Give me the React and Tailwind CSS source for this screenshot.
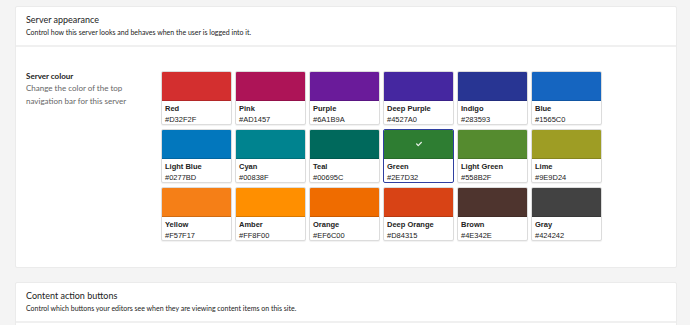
import { FaCheck } from "react-icons/fa";

const colours = [
  { name: "Red", hex: "#D32F2F" },
  { name: "Pink", hex: "#AD1457" },
  { name: "Purple", hex: "#6A1B9A" },
  { name: "Deep Purple", hex: "#4527A0" },
  { name: "Indigo", hex: "#283593" },
  { name: "Blue", hex: "#1565C0" },
  { name: "Light Blue", hex: "#0277BD" },
  { name: "Cyan", hex: "#00838F" },
  { name: "Teal", hex: "#00695C" },
  { name: "Green", hex: "#2E7D32" },
  { name: "Light Green", hex: "#558B2F" },
  { name: "Lime", hex: "#9E9D24" },
  { name: "Yellow", hex: "#F57F17" },
  { name: "Amber", hex: "#FF8F00" },
  { name: "Orange", hex: "#EF6C00" },
  { name: "Deep Orange", hex: "#D84315" },
  { name: "Brown", hex: "#4E342E" },
  { name: "Gray", hex: "#424242" },
];

function Swatch({ colour, selected }) {
  return (
    <div
      className={`h-[54px] rounded-[2px] bg-white overflow-hidden flex flex-col ${
        selected
          ? "border-[1.5px] border-[#2f3fa0]"
          : "border border-[#dcdcdc] shadow-[0_1px_1px_rgba(0,0,0,0.06)]"
      }`}
    >
      <div
        className="h-[29px] shrink-0 flex items-center justify-center border-b border-black/15"
        style={{ backgroundColor: colour.hex }}
      >
        {selected && <FaCheck className="text-white w-[6px] h-[6px] opacity-90" />}
      </div>
      <div className="px-[3px] pt-[2px] font-['Liberation_Sans',Arial,sans-serif] text-[7.5px] leading-[11px] text-[#222]">
        <div className="font-bold">{colour.name}</div>
        <div>{colour.hex}</div>
      </div>
    </div>
  );
}

function SectionHeader({ title, text }) {
  return (
    <div className="px-[10px] pt-[7px] pb-[6px] border-b-2 border-[#f0f0f0]">
      <h2 className="text-[9px] leading-[12px] text-[#222]">{title}</h2>
      <p className="text-[7px] leading-[13px] text-[#222]">{text}</p>
    </div>
  );
}

export default function App() {
  return (
    <div className="h-[325px] bg-[#f4f4f4] pl-[15px] pt-[6px] font-['Lato','Open_Sans',sans-serif] overflow-hidden">
      <div className="w-[662px] bg-white border border-[#ebebeb] rounded-[2px]">
        <SectionHeader
          title="Server appearance"
          text="Control how this server looks and behaves when the user is logged into it."
        />
        <div className="flex pl-[10px] pt-[24px] pb-[26px]">
          <div className="w-[135px] shrink-0 -mt-[1px]">
            <h3 className="text-[8px] leading-[12px] font-bold text-[#222]">Server colour</h3>
            <p className="text-[8px] leading-[13px] text-[#666] pr-2">
              Change the color of the top navigation bar for this server
            </p>
          </div>
          <div className="grid grid-cols-[repeat(6,71px)] gap-x-[3px] gap-y-[4px]">
            {colours.map((c) => (
              <Swatch key={c.name} colour={c} selected={c.name === "Green"} />
            ))}
          </div>
        </div>
      </div>
      <div className="w-[662px] mt-[14px] bg-white border border-[#ebebeb] rounded-[2px]">
        <SectionHeader
          title="Content action buttons"
          text="Control which buttons your editors see when they are viewing content items on this site."
        />
        <div className="h-[20px]"></div>
      </div>
    </div>
  );
}
